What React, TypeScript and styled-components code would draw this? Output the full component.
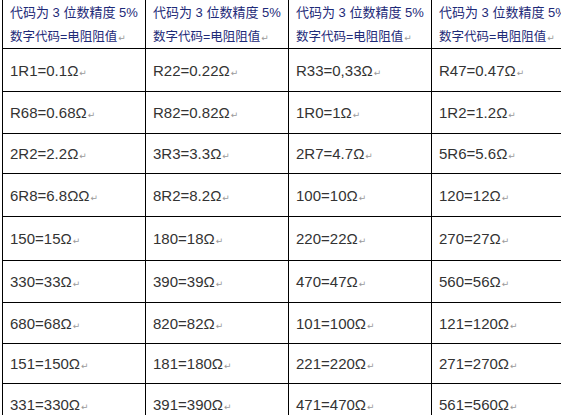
import React from "react";
import styled, { createGlobalStyle } from "styled-components";

const GlobalStyle = createGlobalStyle`
  html, body {
    margin: 0;
    padding: 0;
    background: #fff;
    overflow: hidden;
  }
`;

const Page = styled.div`
  width: 561px;
  height: 415px;
  overflow: hidden;
  padding-left: 2px;
  box-sizing: border-box;
  background: #fff;
`;

const Table = styled.table`
  border-collapse: collapse;
  table-layout: fixed;
  width: 572px;
  font-family: "Liberation Sans", "Noto Sans CJK SC", sans-serif;
`;

const Col = styled.col`
  width: 143px;
`;

const Row = styled.tr<{ $h: number }>`
  height: ${(p) => p.$h}px;
`;

const Cell = styled.td`
  border: 1px solid #000;
  border-top: none;
  padding: 0 0 0 7px;
  vertical-align: middle;
  white-space: nowrap;
  overflow: hidden;
  font-size: 15px;
  color: #333;
`;

const HeadCell = styled(Cell)`
  vertical-align: top;
  color: #1e2a78;
`;

const HeadLine = styled.div<{ $size: number }>`
  height: 24px;
  line-height: 26px;
  font-size: ${(p) => p.$size}px;
`;

const Mark = styled.span`
  font-family: "DejaVu Sans", sans-serif;
  font-size: 9px;
  color: #9a9a9a;
  margin-left: 1px;
`;

const rows: string[][] = [
  ["1R1=0.1Ω", "R22=0.22Ω", "R33=0,33Ω", "R47=0.47Ω"],
  ["R68=0.68Ω", "R82=0.82Ω", "1R0=1Ω", "1R2=1.2Ω"],
  ["2R2=2.2Ω", "3R3=3.3Ω", "2R7=4.7Ω", "5R6=5.6Ω"],
  ["6R8=6.8ΩΩ", "8R2=8.2Ω", "100=10Ω", "120=12Ω"],
  ["150=15Ω", "180=18Ω", "220=22Ω", "270=27Ω"],
  ["330=33Ω", "390=39Ω", "470=47Ω", "560=56Ω"],
  ["680=68Ω", "820=82Ω", "101=100Ω", "121=120Ω"],
  ["151=150Ω", "181=180Ω", "221=220Ω", "271=270Ω"],
  ["331=330Ω", "391=390Ω", "471=470Ω", "561=560Ω"],
];

// row heights read off the screenshot
const heights = [43, 42, 40, 43, 44, 42, 41, 40, 41];

export default function App() {
  return (
    <Page>
      <GlobalStyle />
      <Table>
        <colgroup>
          <Col />
          <Col />
          <Col />
          <Col />
        </colgroup>
        <tbody>
          <Row $h={48}>
            {[0, 1, 2, 3].map((i) => (
              <HeadCell key={i}>
                <HeadLine $size={13}>代码为 3 位数精度 5%</HeadLine>
                <HeadLine $size={12.5}>
                  数字代码=电阻阻值<Mark>↵</Mark>
                </HeadLine>
              </HeadCell>
            ))}
          </Row>
          {rows.map((r, i) => (
            <Row key={i} $h={heights[i]}>
              {r.map((v, j) => (
                <Cell key={j}>
                  {v}
                  <Mark>↵</Mark>
                </Cell>
              ))}
            </Row>
          ))}
        </tbody>
      </Table>
    </Page>
  );
}
